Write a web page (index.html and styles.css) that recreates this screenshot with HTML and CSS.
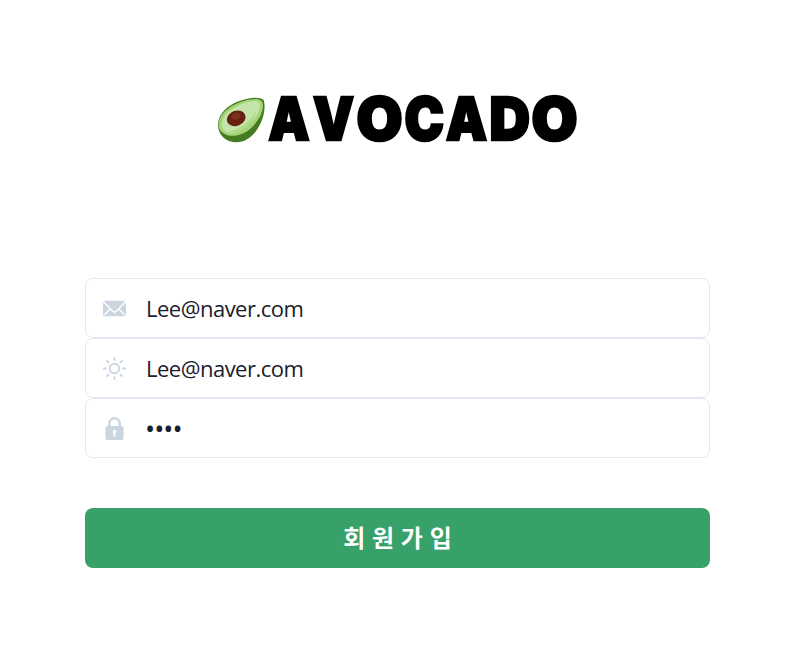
FILE: index.html
```html
<!DOCTYPE html>
<html lang="ko">
<head>
<meta charset="utf-8">
<title>AVOCADO</title>
<link rel="stylesheet" href="styles.css">
</head>
<body>
<main class="signup">
  <svg class="logo" viewBox="0 0 368 60" role="img" aria-label="AVOCADO">
    <defs><clipPath id="skin"><path id="fruit" d="M4 35C4 23 15 15 24 11.500C35 7 46 6.500 49.500 10C52 16 50 29 44 38C37 50 26 55 15 51C8 48 4 42 4 35Z"/></clipPath></defs>
    <use href="#fruit" fill="#427b20"/>
    <g clip-path="url(#skin)">
      <path d="M5 33C6 21 20 14 30 11C40 8 49 8 49 15C49 24 43 33 35 40C27 46 16 48 9 43C5 40 4 37 5 33Z" fill="#a5d477"/>
      <path d="M8 33C9 23 22 16 31 13C39 10 46 10 46 15C45 24 40 31 32 37C25 43 16 45 11 41C8 39 7 36 8 33Z" fill="#c5e4aa"/>
      <path d="M14 41C25 41 38 31 42 19C42 30 33 37 26 41C21 43 17 43 14 41Z" fill="#afda88"/>
    </g>
    <ellipse cx="22.200" cy="28.300" rx="9.600" ry="7.500" transform="rotate(-22 22.200 28.300)" fill="#65200f"/>
    <ellipse cx="21.800" cy="26.300" rx="4.800" ry="3.500" transform="rotate(-22 21.800 26.300)" fill="#7c3022"/>
    <g class="wordmark">
      <text x="54.500" y="49.700" textLength="41" lengthAdjust="spacingAndGlyphs">A</text>
      <text x="99" y="49.700" textLength="41" lengthAdjust="spacingAndGlyphs">V</text>
      <text x="142.500" y="49.700" textLength="46" lengthAdjust="spacingAndGlyphs">O</text>
      <text x="190.500" y="49.700" textLength="39.500" lengthAdjust="spacingAndGlyphs">C</text>
      <text x="232" y="49.700" textLength="41" lengthAdjust="spacingAndGlyphs">A</text>
      <text x="275.500" y="49.700" textLength="40.500" lengthAdjust="spacingAndGlyphs">D</text>
      <text x="317.500" y="49.700" textLength="46" lengthAdjust="spacingAndGlyphs">O</text>
    </g>
  </svg>
  <form class="form">
    <label class="field">
      <svg class="icon" viewBox="0 0 24 24"><path d="M11.114,14.556a1.252,1.252,0,0,0,1.768,0L22.568,4.87a.5.5,0,0,0-.281-.849A1.966,1.966,0,0,0,22,4H2a1.966,1.966,0,0,0-.289.021.5.5,0,0,0-.281.849Z"/><path d="M23.888,5.832a.182.182,0,0,0-.2.039l-6.2,6.2a.251.251,0,0,0,0,.354l5.043,5.043a.75.75,0,1,1-1.06,1.061l-5.043-5.043a.25.25,0,0,0-.354,0l-2.129,2.129a2.75,2.75,0,0,1-3.888,0L7.926,13.488a.251.251,0,0,0-.354,0L2.529,18.531a.75.75,0,0,1-1.06-1.061l5.043-5.043a.251.251,0,0,0,0-.354l-6.2-6.2a.18.18,0,0,0-.2-.039A.182.182,0,0,0,0,6V18a2,2,0,0,0,2,2H22a2,2,0,0,0,2-2V6A.181.181,0,0,0,23.888,5.832Z"/></svg>
      <span class="value">Lee@naver.com</span>
    </label>
    <label class="field">
      <svg class="icon icon-line" viewBox="0 0 24 24"><circle cx="12" cy="12" r="5"/><path d="M12 1v2M12 21v2M4.220 4.220l1.420 1.420M18.360 18.360l1.420 1.420M1 12h2M21 12h2M4.220 19.780l1.420-1.420M18.360 5.640l1.420-1.420"/></svg>
      <span class="value">Lee@naver.com</span>
    </label>
    <label class="field">
      <svg class="icon" viewBox="0 0 24 24"><path d="M19.5,9.5h-.75V6.75a6.75,6.75,0,0,0-13.5,0V9.5H4.5a2,2,0,0,0-2,2V22a2,2,0,0,0,2,2h15a2,2,0,0,0,2-2V11.5A2,2,0,0,0,19.5,9.5Zm-9.5,6a2,2,0,1,1,3,1.723V19.5a1,1,0,0,1-2,0V17.223A1.994,1.994,0,0,1,10,15.5ZM7.75,6.75a4.25,4.25,0,0,1,8.5,0V9a.5.5,0,0,1-.5.5h-7.5A.5.5,0,0,1,7.75,9Z"/></svg>
      <span class="value password">••••</span>
    </label>
    <button class="submit" type="button">회 원 가 입</button>
  </form>
</main>
</body>
</html>
```

FILE: styles.css
```css
* { box-sizing: border-box; }
body {
  margin: 0;
  background: #fff;
  color: #1a202c;
  font-family: "Open Sans", "Noto Sans CJK KR", sans-serif;
}
.signup {
  width: 625px;
  margin-left: 85px;
  padding-top: 90px;
}
.logo {
  display: block;
  width: 368px;
  height: 60px;
  margin-left: 129px;
  overflow: visible;
}
.wordmark {
  font-family: Inter, sans-serif;
  font-weight: 900;
  font-size: 59px;
  fill: #000;
  stroke: #000;
  stroke-width: 2.5px;
}
.form {
  display: flex;
  flex-direction: column;
  margin-top: 128px;
}
.field {
  display: flex;
  align-items: center;
  gap: 20px;
  height: 60px;
  padding-left: 17px;
  border: 1px solid #e2e8f0;
  border-radius: 8px;
}
.icon {
  width: 23px;
  height: 23px;
  margin-top: 1px;
  fill: #cbd5e0;
}
.icon-line {
  fill: none;
  stroke: #cbd5e0;
  stroke-width: 2;
  stroke-linecap: round;
}
.value {
  font-size: 22px;
  line-height: 30px;
  letter-spacing: -.5px;
}
.password {
  margin: 2px 0 0 -1px;
  font-size: 27px;
  letter-spacing: -1px;
}
.submit {
  height: 60px;
  margin-top: 50px;
  padding: 0 0 4px;
  border: 0;
  border-radius: 8px;
  background: #38a169;
  color: #fff;
  font-family: "Noto Sans CJK KR", sans-serif;
  font-size: 24px;
  font-weight: 700;
}
```
